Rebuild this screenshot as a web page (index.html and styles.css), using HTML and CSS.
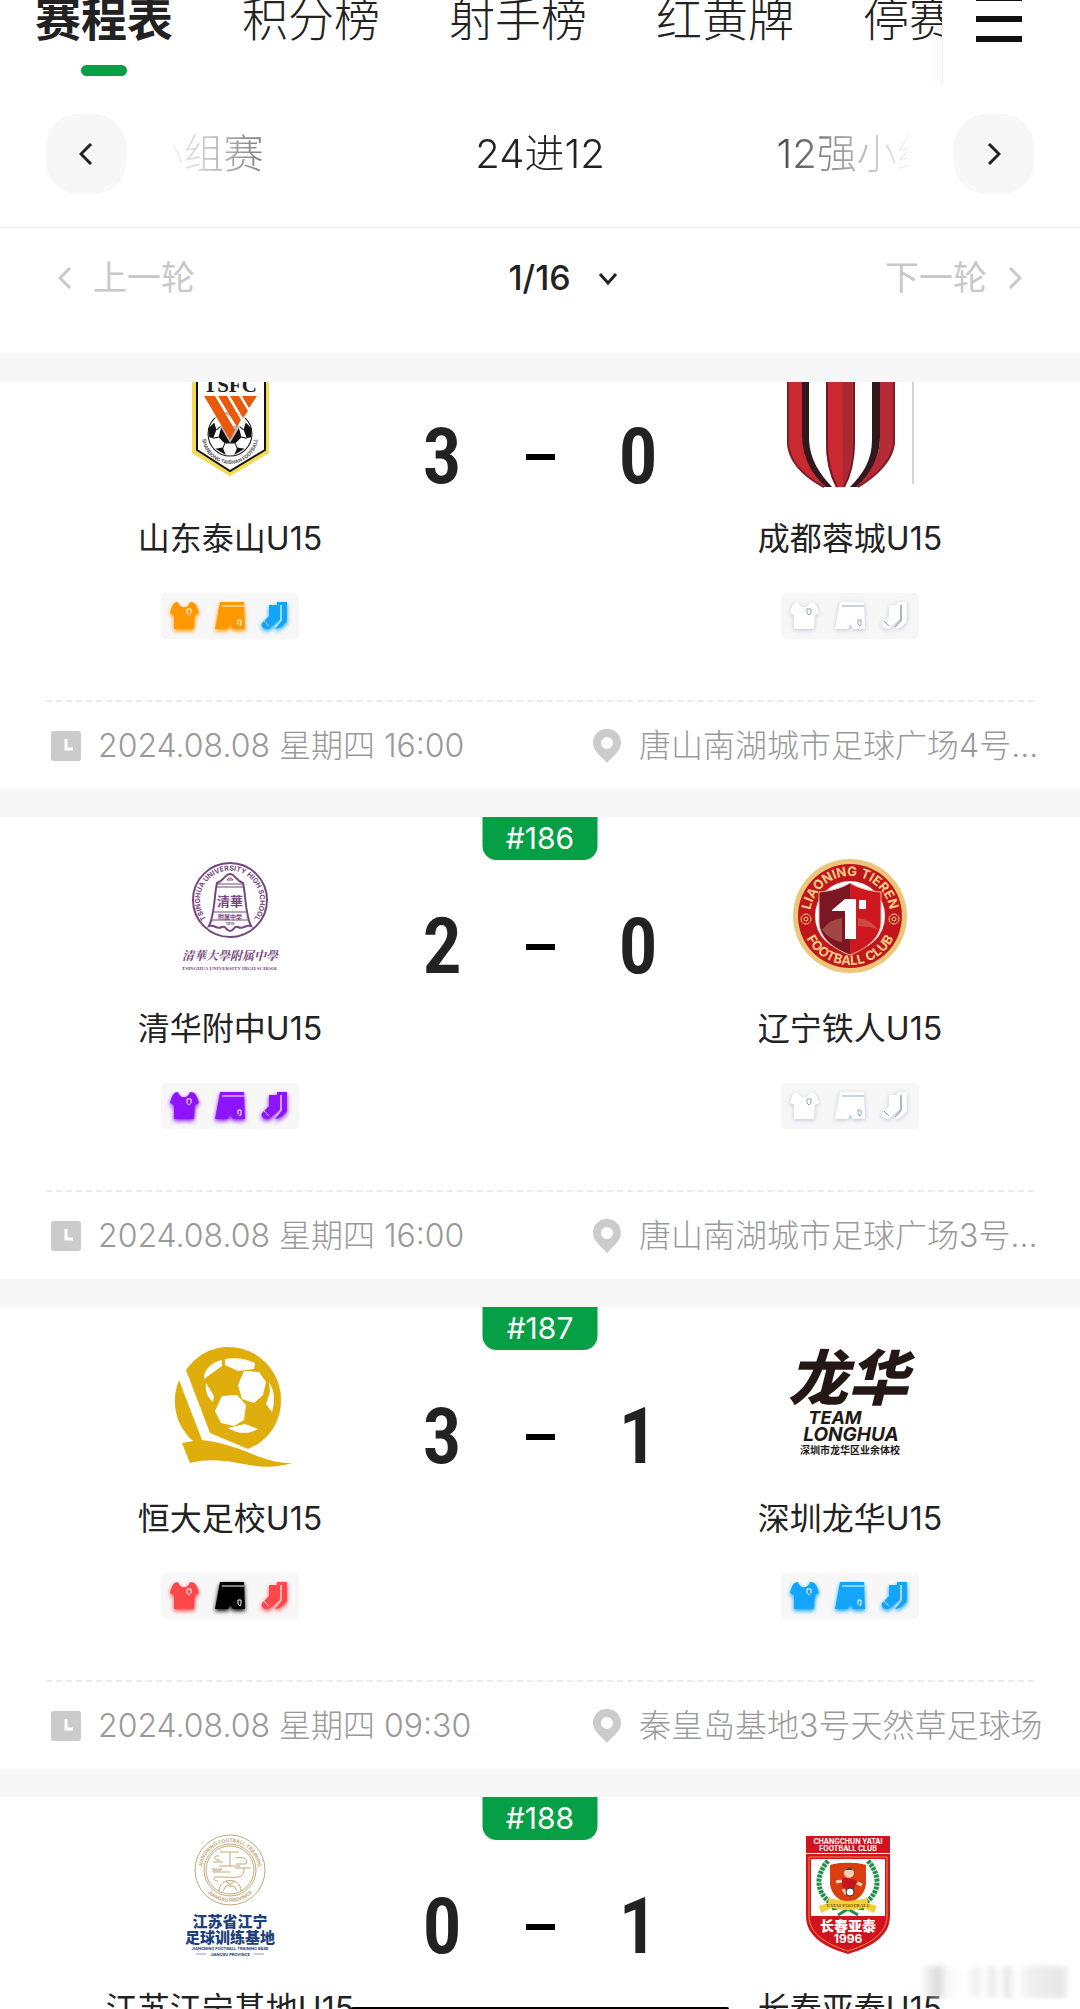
FILE: index.html
```html
<!DOCTYPE html>
<html lang="zh-CN">

<head>
    <meta charset="UTF-8">
    <meta name="viewport" content="width=device-width, initial-scale=1.0">
    <title>赛程表</title>
    <link rel="stylesheet" href="styles.css">
</head>

<body>
    <!-- Shared icons -->
    <svg class="sprite" aria-hidden="true">
        <symbol id="shirt" viewBox="0 0 30 30">
            <path fill="currentColor" d="M8 1C10 8 18 8 20 1C25 1 27 4 29 12L25 14L24 28H4V14L0 12C2 4 4 1 8 1Z" />
            <path class="trim" d="M17 8h4v4l-2 2l-2 -2z" />
        </symbol>
        <symbol id="shorts" viewBox="0 0 30 30">
            <path fill="currentColor" d="M5 1H29L30 28H18L15 23L13 28H0Z" />
            <path class="trim" d="M7 5H29M23 19h3v4l-1 2l-2 -2z" />
        </symbol>
        <symbol id="socks" viewBox="0 0 30 30">
            <path fill="currentColor" d="M17 1H27V20C25 23 20 28 15 28L22 20V4H17Z" />
            <path fill="currentColor" d="M9 4H20V18L10 27C6 30 0 26 2 22L9 15Z" />
            <path class="trim" d="M21 4V19L15 26M4 20L9 25" />
        </symbol>
        <symbol id="clock" viewBox="0 0 30 30">
            <rect width="30" height="30" rx="3" fill="#cbcbcb" />
            <path d="M15 8V18H22" fill="none" stroke="#fff" stroke-width="3" />
        </symbol>
        <symbol id="pin" viewBox="0 0 30 36">
            <path fill="#cbcbcb" fill-rule="evenodd" d="M15 1C7 1 1 7 1 15C1 23 9 28 15 35C21 28 29 23 29 15C29 7 23 1 15 1ZM15 9a6 6 0 1 1 0 12a6 6 0 1 1 0 -12Z" />
        </symbol>
        <symbol id="ball" viewBox="0 0 44 44">
            <circle cx="22" cy="22" r="21" fill="#fff" stroke="#111" stroke-width="1" />
            <path fill="#111" d="M14 14H30L33 25L27 31H17L11 25ZM1 17L7 11L9 18L6 26L2 25ZM43 17L37 11L35 18L38 26L42 25ZM8 36L15 35L18 42ZM36 36L29 35L26 42ZM16 2Q22 0 28 2L22 5Z" />
            <path fill="none" stroke="#111" d="M9 18L14 14M35 18L30 14M6 26L11 25M38 26L33 25M17 31L15 36M27 31L29 36" />
        </symbol>
        <symbol id="chevron-left" viewBox="0 0 14 22">
            <path d="M12 1L2 11L12 21" fill="none" stroke="currentColor" stroke-width="3" />
        </symbol>
        <symbol id="chevron-right" viewBox="0 0 14 22">
            <path d="M2 1L12 11L2 21" fill="none" stroke="currentColor" stroke-width="3" />
        </symbol>
    </svg>

    <div class="app">
        <header class="header">
            <div class="topbar">
                <nav class="tabs" aria-label="赛事">
                    <a class="tab active" href="#schedule">赛程表</a>
                    <a class="tab" href="#table">积分榜</a>
                    <a class="tab" href="#scorers">射手榜</a>
                    <a class="tab" href="#cards">红黄牌</a>
                    <a class="tab" href="#bans">停赛</a>
                </nav>
                <button class="menu" type="button" aria-label="菜单">
                    <svg width="46" height="42" viewBox="0 0 46 42"><path fill="#111" d="M0 0H46V1H0ZM0 16H46V22H0ZM0 36H46V42H0Z" /></svg>
                </button>
            </div>

            <div class="stages">
                <button class="stage-arrow" type="button" aria-label="上一阶段"><svg class="chevron"><use href="#chevron-left" /></svg></button>
                <div class="stage-list">
                    <span>小组赛</span>
                    <span>24进12</span>
                    <span>12强小组赛</span>
                </div>
                <button class="stage-arrow" type="button" aria-label="下一阶段"><svg class="chevron"><use href="#chevron-right" /></svg></button>
            </div>

            <div class="rounds">
                <button class="round-nav" type="button"><svg class="chevron"><use href="#chevron-left" /></svg>上一轮</button>
                <label class="round-picker">
                    <select aria-label="轮次">
                        <option>1/16</option>
                    </select>
                    <svg viewBox="0 0 20 14"><path d="M2 2L10 11L18 2" fill="none" stroke="#222" stroke-width="3" /></svg>
                </label>
                <button class="round-nav next" type="button">下一轮<svg class="chevron"><use href="#chevron-right" /></svg></button>
            </div>
        </header>

        <main class="matches">
            <article class="match scrolled">
                <div class="match-body">
                    <div class="team">
                        <svg class="logo" viewBox="0 0 124 124">
                            <path d="M26 -10H99V88L62 110L26 88Z" fill="#fff" stroke="#f2dc55" stroke-width="4" />
                            <path d="M29 -10H97V86L62 107L29 86Z" fill="#fff" stroke="#16110d" stroke-width="2" />
                            <text x="62" y="28" text-anchor="middle" class="serif" font-size="21" fill="#222">TSFC</text>
                            <use href="#ball" x="39" y="47" width="46" height="46" />
                            <path fill="#fff" d="M34 31H91L62 79Z" opacity=".7" />
                            <path fill="#e8590c" d="M36 32H47L67 66L62 76ZM50 32H59L73 56L69 63ZM62 32H71L80 47L75 54ZM74 32H89L81 44Z" />
                            <path id="arc-ts" d="M34 72A28 28 0 0 0 90 72" fill="none" />
                            <text class="latin" font-size="5" fill="#555"><textPath href="#arc-ts" startOffset="50%" text-anchor="middle">SHANDONG TAISHAN FOOTBALL</textPath></text>
                        </svg>
                        <h2>山东泰山U15</h2>
                        <div class="kit">
                            <svg class="orange"><use href="#shirt" /></svg>
                            <svg class="orange"><use href="#shorts" /></svg>
                            <svg class="blue"><use href="#socks" /></svg>
                        </div>
                    </div>
                    <div class="score"><span>3</span><i></i><span>0</span></div>
                    <div class="team">
                        <svg class="logo" viewBox="0 0 124 124">
                            <path fill="#cb2930" d="M-1 0H14V72C17 94 28 110 42 123H35C15 112 -1 97 -1 78Z" />
                            <path fill="#33191d" d="M14 0H21V76C22 96 32 110 44 123H38C24 111 15 94 14 74Z" />
                            <path fill="#cb2930" d="M38 0H67V78C66 98 62 112 56 123H48C41 110 38 96 38 78Z" />
                            <path fill="#a82a30" d="M54 0H64V78C64 98 60 112 55 121Z" />
                            <path d="M39 0V78C39 96 42 110 49 123M66 0V78C66 98 62 112 56 123" fill="none" stroke="#6f1c28" stroke-width="2" />
                            <path fill="#b62b33" d="M92 0H107V78C106 98 88 112 70 123H64C82 110 92 94 92 74Z" />
                            <path fill="#33191d" d="M84 0H92V74C92 94 82 110 68 123H62C75 110 84 96 84 76Z" />
                            <path d="M0 0V78C1 97 15 112 36 123M106 0V78C104 98 88 112 70 123" fill="none" stroke="#7d2029" stroke-width="2" />
                            <path d="M125 0V120" stroke="#aaa" />
                        </svg>
                        <h2>成都蓉城U15</h2>
                        <div class="kit">
                            <svg class="white"><use href="#shirt" /></svg>
                            <svg class="white"><use href="#shorts" /></svg>
                            <svg class="white"><use href="#socks" /></svg>
                        </div>
                    </div>
                </div>
                <footer class="match-info">
                    <time class="when" datetime="2024-08-08T16:00"><svg><use href="#clock" /></svg>2024.08.08 星期四 16:00</time>
                    <span class="where"><svg><use href="#pin" /></svg>唐山南湖城市足球广场4号...</span>
                </footer>
            </article>

            <article class="match">
                <strong class="number">#186</strong>
                <div class="match-body">
                    <div class="team">
                        <svg class="logo" viewBox="0 0 124 124">
                            <g fill="none" stroke="#75477f">
                                <circle cx="62" cy="46" r="37" stroke-width="2" />
                                <path stroke-width="2" d="M62 20C57 20 56 27 49 29C46 42 47 60 41 72C47 70 48 76 54 73C58 71 58 77 62 77C66 77 66 71 70 73C76 76 77 70 83 72C77 60 78 42 75 29C68 27 67 20 62 20Z" />
                                <path d="M59 26Q62 22 65 26ZM49 30H75M48 33H76M46 58H78M44 66H80" />
                            </g>
                            <g fill="#75477f" text-anchor="middle">
                                <path id="arc-qh" d="M41 68A30 30 0 1 1 83 68" fill="none" />
                                <text class="latin" font-size="7"><textPath href="#arc-qh" startOffset="50%">TSINGHUA UNIVERSITY HIGH SCHOOL</textPath></text>
                                <text class="cjk" x="62" y="52" font-size="13">清華</text>
                                <text class="cjk" x="62" y="65" font-size="6">附属中学</text>
                                <text class="latin" x="62" y="71" font-size="4">1915</text>
                                <text class="brush" x="62" y="106" font-size="12">清華大學附属中學</text>
                                <text class="serif" x="62" y="116" font-size="5">TSINGHUA UNIVERSITY HIGH SCHOOL</text>
                            </g>
                        </svg>
                        <h2>清华附中U15</h2>
                        <div class="kit">
                            <svg class="purple"><use href="#shirt" /></svg>
                            <svg class="purple"><use href="#shorts" /></svg>
                            <svg class="purple"><use href="#socks" /></svg>
                        </div>
                    </div>
                    <div class="score"><span>2</span><i></i><span>0</span></div>
                    <div class="team">
                        <svg class="logo" viewBox="0 0 124 124">
                            <circle cx="62" cy="62" r="57" fill="#ecc67a" />
                            <circle cx="62" cy="62" r="52" fill="#c0171c" />
                            <circle cx="62" cy="62" r="35" fill="#fff" />
                            <path d="M62 29C52 35 42 37 31 38V68C31 84 46 95 62 101Z" fill="#7c1622" />
                            <path d="M62 29C72 35 82 37 93 38V68C93 84 78 95 62 101Z" fill="#cc181e" />
                            <path d="M62 29C52 35 42 37 31 38V68C31 84 46 95 62 101C78 95 93 84 93 68V38C82 37 72 35 62 29Z" fill="none" stroke="#eab8a0" />
                            <path d="M34 76Q42 65 54 64V88Q42 86 34 76ZM70 64Q84 66 90 76L82 73L70 72Z" fill="#d89078" opacity=".4" />
                            <path d="M44 56L57 45H68V85H57V57H44ZM71 46H78V55H71Z" fill="#fff" />
                            <path id="arc-ln-top" d="M22 62A40 40 0 0 1 102 62" fill="none" />
                            <path id="arc-ln-bottom" d="M13 62A49 49 0 0 0 111 62" fill="none" />
                            <g class="latin" fill="#f6cf88" font-size="13" text-anchor="middle">
                                <text><textPath href="#arc-ln-top" startOffset="50%">LIAONING TIEREN</textPath></text>
                                <text><textPath href="#arc-ln-bottom" startOffset="50%">FOOTBALL CLUB</textPath></text>
                            </g>
                            <g fill="none" stroke="#f6cf88">
                                <circle cx="18" cy="65" r="5" />
                                <circle cx="18" cy="65" r="2" />
                                <circle cx="106" cy="65" r="5" />
                                <circle cx="106" cy="65" r="2" />
                            </g>
                        </svg>
                        <h2>辽宁铁人U15</h2>
                        <div class="kit">
                            <svg class="white"><use href="#shirt" /></svg>
                            <svg class="white"><use href="#shorts" /></svg>
                            <svg class="white"><use href="#socks" /></svg>
                        </div>
                    </div>
                </div>
                <footer class="match-info">
                    <time class="when" datetime="2024-08-08T16:00"><svg><use href="#clock" /></svg>2024.08.08 星期四 16:00</time>
                    <span class="where"><svg><use href="#pin" /></svg>唐山南湖城市足球广场3号...</span>
                </footer>
            </article>

            <article class="match">
                <strong class="number">#187</strong>
                <div class="match-body">
                    <div class="team">
                        <svg class="logo" viewBox="0 0 124 124">
                            <path fill="#e0ae0c" d="M18 26C30 9 46 3 60 3C90 3 113 27 113 56C113 79 100 97 80 105L42 89Z" />
                            <path fill="#e0ae0c" d="M11 36L34 96C76 101 92 119 124 119C84 131 64 109 22 119L14 99L25 97C8 82 2 58 11 36Z" />
                            <g fill="#fff">
                                <path d="M76 27L91 28L98 38L95 51L86 59L74 55L70 41Z" />
                                <path d="M54 52L69 51L78 61L76 76L66 82L53 79L47 67Z" />
                                <path d="M57 15C68 13 78 15 87 19L86 25L70 27L57 21Z" />
                                <path d="M54 16V22L36 35C35 26 44 18 54 16Z" />
                                <path d="M38 39L46 52L45 58C39 53 37 46 38 39Z" />
                                <path d="M101 38C107 47 107 58 104 68L98 60L102 48Z" />
                                <path d="M60 84L77 80L90 85C80 91 70 90 60 84Z" />
                            </g>
                        </svg>
                        <h2>恒大足校U15</h2>
                        <div class="kit">
                            <svg class="red"><use href="#shirt" /></svg>
                            <svg class="black"><use href="#shorts" /></svg>
                            <svg class="red"><use href="#socks" /></svg>
                        </div>
                    </div>
                    <div class="score"><span>3</span><i></i><span>1</span></div>
                    <div class="team">
                        <svg class="logo" viewBox="0 0 124 124">
                            <g fill="#231815" font-style="italic" text-anchor="middle">
                                <text class="heavy" x="60" y="56" font-size="60">龙华</text>
                                <text class="latin" x="47" y="80" font-size="18">TEAM</text>
                                <text class="latin" x="63" y="97" font-size="19">LONGHUA</text>
                            </g>
                            <text class="cjk" x="62" y="110" font-size="10" text-anchor="middle" fill="#231815">深圳市龙华区业余体校</text>
                        </svg>
                        <h2>深圳龙华U15</h2>
                        <div class="kit">
                            <svg class="blue"><use href="#shirt" /></svg>
                            <svg class="blue"><use href="#shorts" /></svg>
                            <svg class="blue"><use href="#socks" /></svg>
                        </div>
                    </div>
                </div>
                <footer class="match-info">
                    <time class="when" datetime="2024-08-08T09:30"><svg><use href="#clock" /></svg>2024.08.08 星期四 09:30</time>
                    <span class="where"><svg><use href="#pin" /></svg>秦皇岛基地3号天然草足球场</span>
                </footer>
            </article>

            <article class="match">
                <strong class="number">#188</strong>
                <div class="match-body">
                    <div class="team">
                        <svg class="logo" viewBox="0 0 124 124">
                            <g fill="none" stroke="#c2a878">
                                <circle cx="62" cy="36" r="35" />
                                <circle cx="62" cy="36" r="26" />
                                <circle cx="62" cy="36" r="24" />
                                <path d="M52 18H71M62 18V32M51 32H72M51 22C45 21 45 27 52 26M45 28H55M44 35H54M54 35C49 40 45 33 45 38H62M68 24C78 22 80 27 78 30H68M67 34H83M76 34C76 46 70 43 48 43C44 43 46 48 50 47" />
                                <path d="M51 57C51 43 73 43 73 57M58 47L62 51L67 47M55 57L58 52M69 57L66 52M58 52H66" />
                            </g>
                            <path id="arc-jn-top" d="M34 36A28 28 0 0 1 90 36" fill="none" />
                            <path id="arc-jn-bottom" d="M30 36A32 32 0 0 0 94 36" fill="none" />
                            <g class="latin" fill="#c2a878" font-size="5" text-anchor="middle">
                                <text><textPath href="#arc-jn-top" startOffset="50%">JIANGNING FOOTBALL TRAINING</textPath></text>
                                <text><textPath href="#arc-jn-bottom" startOffset="50%">JIANGSU PROVINCE</textPath></text>
                            </g>
                            <g fill="#1d3f7c" text-anchor="middle">
                                <text class="heavy" x="62" y="93" font-size="15">江苏省江宁</text>
                                <text class="heavy" x="62" y="109" font-size="15">足球训练基地</text>
                                <text class="latin" x="62" y="116" font-size="4">JIANGNING FOOTBALL TRAINING BASE</text>
                                <text class="latin" x="62" y="122" font-size="4">JIANGSU PROVINCE</text>
                            </g>
                            <path d="M28 120H38M86 120H96" stroke="#8b9bbb" />
                        </svg>
                        <h2>江苏江宁基地U15</h2>
                        <div class="kit">
                            <svg class="blue"><use href="#shirt" /></svg>
                            <svg class="blue"><use href="#shorts" /></svg>
                            <svg class="blue"><use href="#socks" /></svg>
                        </div>
                    </div>
                    <div class="score"><span>0</span><i></i><span>1</span></div>
                    <div class="team">
                        <svg class="logo" viewBox="0 0 124 124">
                            <path fill="#d0141f" d="M18 2H102V19H18ZM18 20H102V82C102 104 80 114 60 120C40 114 18 104 18 82Z" />
                            <path d="M21 23H99V82C99 101 79 111 60 117C41 111 21 101 21 82Z" fill="none" stroke="#ef8f3c" />
                            <path d="M23 25H97V82H23Z" fill="#fff" />
                            <path d="M42 31C50 28 70 28 78 31V50C77 60 70 66 60 69C50 66 43 60 42 50Z" fill="#d93d10" />
                            <circle cx="61" cy="39" r="5" fill="#f0d0b8" />
                            <path d="M56 37Q61 30 66 37L64 36H58Z" fill="#444" />
                            <path d="M53 45Q61 42 69 47L66 55H55Z" fill="#c4161c" />
                            <path d="M48 48L54 47M69 49L74 51M55 55L58 60M64 55L61 60" stroke="#f0d0b8" stroke-width="3" />
                            <circle cx="62" cy="58" r="4" fill="#fff" stroke="#333" />
                            <g fill="none" stroke="#1f8f48" stroke-width="5" stroke-dasharray="3 1">
                                <path d="M40 27C28 40 27 58 43 69" />
                                <path d="M80 27C92 40 93 58 77 69" />
                            </g>
                            <path d="M44 75Q60 71 76 75M50 81L60 75L70 81" fill="none" stroke="#1f8f48" stroke-width="3" />
                            <path d="M31 72L40 69L41 64Q60 70 79 64L80 69L89 72L86 79L76 74Q60 78 44 74L33 79Z" fill="#f3cf3a" />
                            <g fill="#fff" text-anchor="middle">
                                <text class="latin" x="60" y="10" font-size="7">CHANGCHUN YATAI</text>
                                <text class="latin" x="60" y="17" font-size="7">FOOTBALL CLUB</text>
                                <text class="heavy" x="60" y="97" font-size="14">长春亚泰</text>
                                <text class="latin" x="60" y="109" font-size="12">1996</text>
                                <text class="serif" x="60" y="73" font-size="5" fill="#7a5410">YATAI FOOTBALL</text>
                            </g>
                        </svg>
                        <h2>长春亚泰U15</h2>
                        <div class="kit">
                            <svg class="red"><use href="#shirt" /></svg>
                            <svg class="red"><use href="#shorts" /></svg>
                            <svg class="red"><use href="#socks" /></svg>
                        </div>
                    </div>
                </div>
            </article>
        </main>

        <div class="smudge"></div>
        <div class="home-bar"></div>
    </div>
</body>

</html>
```

FILE: styles.css
```css
:root {
    --green: #05a045;
    --text: #222;
    --muted: #999;
    --disabled: #c8c8c8;
    --gap-bg: #f7f7f7;
}

* {
    box-sizing: border-box;
}

body {
    margin: 0;
    background: #fff;
    color: var(--text);
    font-family: Inter, "Noto Sans CJK SC", sans-serif;
}

button,
select {
    border: 0;
    padding: 0;
    background: none;
    color: inherit;
    font: inherit;
    cursor: pointer;
}

.sprite {
    position: absolute;
    width: 0;
    height: 0;
}

.app {
    position: relative;
    display: flex;
    flex-direction: column;
    height: 100vh;
    overflow: hidden;
}

/* Header */
.header {
    position: relative;
    z-index: 2;
    flex: none;
    background: #fff;
    border-bottom: 29px solid var(--gap-bg);
}

.topbar {
    display: flex;
    height: 84px;
}

.tabs {
    display: flex;
    flex: 1;
    gap: 69px;
    padding-left: 35px;
    overflow: hidden;
    border-right: 1px solid #eee;
    background: linear-gradient(to left, #fafafa, #fff 12px);
}

.tab {
    display: flex;
    flex: none;
    flex-direction: column;
    align-items: center;
    gap: 27px;
    color: var(--text);
    font-size: 46px;
    font-weight: 300;
    line-height: 38px;
    text-decoration: none;
    white-space: nowrap;
}

.tab.active {
    font-weight: 700;
}

.tab.active::after {
    content: "";
    width: 46px;
    height: 11px;
    border-radius: 6px;
    background: var(--green);
}

.menu {
    display: flex;
    width: 137px;
    padding-left: 33px;
}

/* Stage switcher */
.stages {
    display: flex;
    align-items: center;
    gap: 40px;
    padding: 30px 46px 33px;
    border-bottom: 1px solid #e9e9e9;
}

.stage-arrow {
    display: flex;
    align-items: center;
    justify-content: center;
    flex: none;
    width: 80px;
    height: 80px;
    border-radius: 32px;
    background: var(--gap-bg);
}

.chevron {
    width: 14px;
    height: 22px;
}

.stage-list {
    display: flex;
    justify-content: center;
    flex: 1;
    min-width: 0;
    overflow: hidden;
    font-size: 40px;
    font-weight: 300;
    line-height: 56px;
    -webkit-mask-image: linear-gradient(to right, transparent, #000 22%, #000 78%, transparent);
    mask-image: linear-gradient(to right, transparent, #000 22%, #000 78%, transparent);
}

.stage-list span {
    flex: 0 0 45%;
    text-align: center;
    white-space: nowrap;
}

/* Round switcher */
.rounds {
    display: grid;
    grid-template-columns: 1fr auto 1fr;
    align-items: center;
    padding: 28px 58px 53px;
    line-height: 44px;
}

.round-nav {
    display: flex;
    align-items: center;
    gap: 21px;
    height: 44px;
    color: var(--disabled);
    font-size: 34px;
}

.round-nav.next {
    justify-self: end;
}

.round-picker {
    position: relative;
    display: flex;
}

.round-picker select {
    height: 44px;
    padding: 0 60px;
    appearance: none;
    font-size: 34px;
    font-weight: 500;
}

.round-picker svg {
    position: absolute;
    top: 16px;
    right: 14px;
    width: 20px;
    height: 14px;
    pointer-events: none;
}

/* Matches */
.matches {
    flex: 1;
    min-height: 0;
    overflow: hidden;
    background: var(--gap-bg);
}

.match {
    position: relative;
    margin-bottom: 28px;
    background: #fff;
}

/* part of the first card sits under the header */
.match.scrolled {
    margin-top: -55px;
}

.number {
    position: absolute;
    top: 0;
    left: 50%;
    width: 115px;
    transform: translateX(-50%);
    border-radius: 0 0 14px 14px;
    background: var(--green);
    color: #fff;
    font-size: 30px;
    font-weight: 400;
    line-height: 43px;
    text-align: center;
}

.match-body {
    display: grid;
    grid-template-columns: 1fr 252px 1fr;
    margin: 0 46px;
    padding: 37px 0 61px;
}

.team {
    display: flex;
    flex-direction: column;
    align-items: center;
}

.logo {
    width: 124px;
    height: 124px;
    overflow: visible;
}

.logo .latin {
    font-family: Inter, sans-serif;
    font-weight: 700;
}

.logo .serif {
    font-family: "Liberation Serif", serif;
    font-weight: 700;
}

.logo .cjk {
    font-family: "Noto Sans CJK SC", sans-serif;
    font-weight: 700;
}

.logo .heavy {
    font-family: "Noto Sans CJK SC", sans-serif;
    font-weight: 900;
}

.logo .brush {
    font-family: "Noto Serif CJK SC", "Noto Sans CJK SC", serif;
    font-style: italic;
    font-weight: 700;
}

.team h2 {
    margin: 29px 0 32px;
    font-size: 32px;
    font-weight: 400;
    line-height: 44px;
    white-space: nowrap;
}

.kit {
    display: flex;
    align-items: center;
    justify-content: space-between;
    width: 138px;
    height: 46px;
    padding: 0 9px;
    border-radius: 5px;
    background: var(--gap-bg);
}

.kit svg {
    width: 30px;
    height: 30px;
    overflow: visible;
    filter: drop-shadow(0 2px 2px currentColor);
}

.trim {
    fill: none;
    stroke: var(--trim, #fff);
    stroke-width: 1;
}

.orange { color: #ff9800; }
.blue { color: #12a5fb; }
.purple { color: #8d14fb; }
.red { color: #fd474b; }
.black { color: #000; }

.kit .white {
    --trim: #93a3b5;
    color: #fff;
    filter: drop-shadow(0 1px 2px #b9c3d6);
}

.score {
    display: grid;
    grid-template-columns: 56px 1fr 56px;
    align-items: center;
    justify-items: center;
    height: 58px;
    margin-top: 64px;
    font-family: "Roboto Condensed", "Liberation Sans Narrow", Roboto, sans-serif;
    font-size: 78px;
    font-weight: 600;
    line-height: 58px;
}

.score i {
    width: 29px;
    height: 6px;
    background: #000;
}

.match-info {
    display: grid;
    grid-template-columns: 541px 1fr;
    align-items: center;
    height: 89px;
    margin: 0 46px;
    padding-left: 5px;
    border-top: 2px dashed #ebebeb;
    color: var(--muted);
    font-size: 32px;
    font-weight: 300;
    line-height: 40px;
    white-space: nowrap;
}

.when,
.where {
    display: flex;
    align-items: center;
    gap: 17px;
    height: 40px;
}

.when svg {
    width: 30px;
    height: 30px;
}

.where svg {
    width: 30px;
    height: 36px;
}

/* Overlays */
.smudge {
    position: absolute;
    right: 10px;
    bottom: 11px;
    width: 150px;
    height: 32px;
    background: linear-gradient(to right, transparent, #ccc 12%, #f4f4f4 18%, #fff 30%, #ececec 38%, #fff 43%, #e2e2e2 48%, #fff 53%, #ddd 58%, #fff 64%, #e8e8e8 74%, #ddd 95%, transparent);
    filter: blur(2px);
    opacity: .7;
}

.home-bar {
    position: absolute;
    bottom: 0;
    left: 50%;
    width: 35%;
    height: 2px;
    transform: translateX(-50%);
    border-radius: 2px 2px 0 0;
    background: #000;
}
```
